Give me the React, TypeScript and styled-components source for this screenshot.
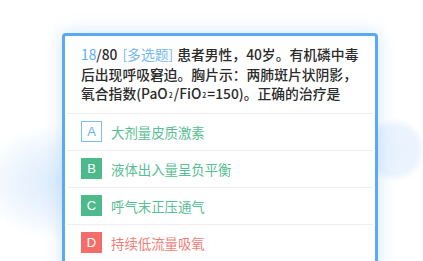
import React from 'react'
import styled, { createGlobalStyle } from 'styled-components'

const GlobalStyle = createGlobalStyle`
  html, body {
    margin: 0;
    padding: 0;
    background: #ffffff;
  }
  body {
    font-family: "Noto Sans CJK SC", "Liberation Sans", sans-serif;
  }
`;

const Page = styled.div`
  width: 423px;
  height: 261px;
  overflow: hidden;
  padding: 33px 0 0 62px;
  box-sizing: border-box;
  background:
    radial-gradient(circle at 394px 150px, #e8f2fd 0, #ebf4fe 24px, rgba(255, 255, 255, 0) 32px),
    radial-gradient(ellipse 78px 58px at 58px 182px, #ddedfc 0, rgba(230, 241, 253, 0.75) 55%, rgba(255, 255, 255, 0) 100%),
    #ffffff;
`;

const Card = styled.div`
  width: 316px;
  background: #ffffff;
  border: 3px solid #5aa9f5;
  border-radius: 4px;
  box-sizing: border-box;
  box-shadow: 0 0 18px rgba(90, 169, 245, 0.28);
  min-height: 260px;
`;

const Question = styled.div`
  margin: 0 2px;
  padding: 9px 8px 7px 14px;
  font-size: 13.8px;
  font-weight: 500;
  line-height: 19.5px;
  color: #2b2b2b;
  border-bottom: 1px solid #eeeeee;
`;

const Index = styled.span`
  color: #5eaef0;
  font-weight: 400;
`;

const Tag = styled.span`
  color: #74b8f2;
  font-weight: 400;
  margin: 0 4px 0 5px;
`;

const Sub = styled.span`
  font-size: 7px;
  vertical-align: 1px;
  margin: 0 1px;
`;

const OptionRow = styled.div`
  display: flex;
  align-items: center;
  gap: 9px;
  height: 36px;
  margin: 0 2px;
  padding-left: 14px;
  border-bottom: 1px solid #eeeeee;
`;

type Tone = 'blue' | 'green' | 'red';

const boxBg = (t: Tone) => (t === 'blue' ? '#ffffff' : t === 'green' ? '#4dba8b' : '#f46d68');
const boxBorder = (t: Tone) => (t === 'blue' ? '#7bbcf5' : boxBg(t));
const textColor = (t: Tone) => (t === 'red' ? '#f27c77' : '#58be93');

const Letter = styled.div<{ $tone: Tone }>`
  width: 21px;
  height: 21px;
  box-sizing: border-box;
  border: 1px solid ${({ $tone }) => boxBorder($tone)};
  background: ${({ $tone }) => boxBg($tone)};
  color: ${({ $tone }) => ($tone === 'blue' ? '#6ab3f4' : '#ffffff')};
  font-family: "Liberation Sans", Arial, sans-serif;
  font-size: 13px;
  display: flex;
  align-items: center;
  justify-content: center;
  flex-shrink: 0;
`;

const OptionText = styled.span<{ $tone: Tone }>`
  color: ${({ $tone }) => textColor($tone)};
  font-size: 13.4px;
`;

const options: { key: string; text: string; box: Tone; tone: Tone }[] = [
  { key: 'A', text: '大剂量皮质激素', box: 'blue', tone: 'green' },
  { key: 'B', text: '液体出入量呈负平衡', box: 'green', tone: 'green' },
  { key: 'C', text: '呼气末正压通气', box: 'green', tone: 'green' },
  { key: 'D', text: '持续低流量吸氧', box: 'red', tone: 'red' },
]

export default function App() {
  return (
    <>
      <GlobalStyle />
      <Page>
        <Card>
          <Question>
            <Index>18</Index>/80<Tag>[多选题]</Tag>患者男性，40岁。有机磷中毒
            <br />
            后出现呼吸窘迫。胸片示：两肺斑片状阴影，
            <br />
            氧合指数(PaO<Sub>2</Sub>/FiO<Sub>2</Sub>=150)。正确的治疗是
          </Question>
          {options.map((o) => (
            <OptionRow key={o.key}>
              <Letter $tone={o.box}>{o.key}</Letter>
              <OptionText $tone={o.tone}>{o.text}</OptionText>
            </OptionRow>
          ))}
        </Card>
      </Page>
    </>
  )
}
